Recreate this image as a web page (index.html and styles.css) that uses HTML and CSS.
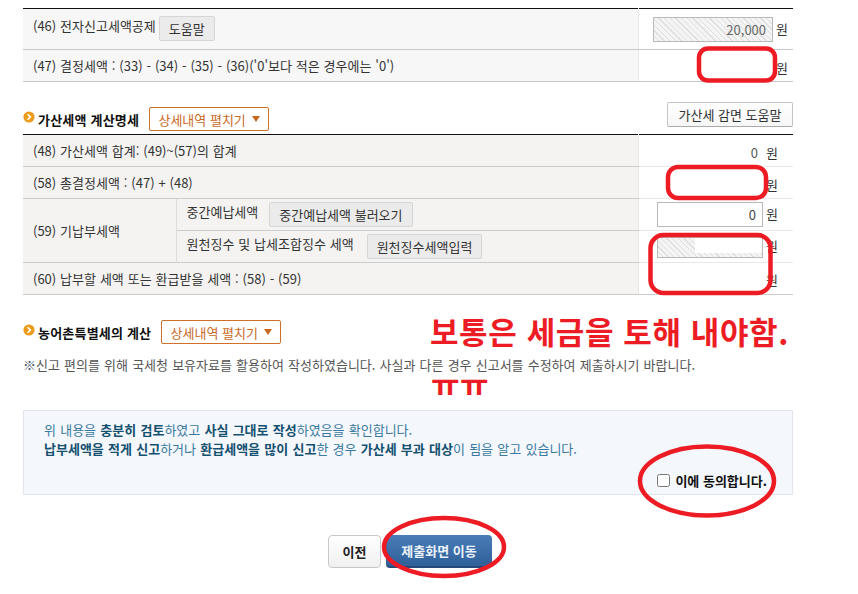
FILE: index.html
```html
<!DOCTYPE html>
<html lang="ko">
<head>
<meta charset="utf-8">
<title>세액 계산</title>
<link rel="stylesheet" href="styles.css">
</head>
<body>
<main class="page">
  <table class="tax warm-none">
    <colgroup><col class="c1"><col class="c2"><col class="c3"></colgroup>
    <tr class="tall">
      <th colspan="2"><span class="nudge">(46) 전자신고세액공제</span><button class="btn-grey">도움말</button></th>
      <td><span class="field hatch">20,000</span><span class="won">원</span></td>
    </tr>
    <tr>
      <th colspan="2">(47) 결정세액 : (33) - (34) - (35) - (36)('0'보다 적은 경우에는 '0')</th>
      <td><span class="won low">원</span></td>
    </tr>
  </table>

  <div class="head first">
    <div class="head-left">
      <svg class="bullet" viewBox="0 0 12 12"><circle cx="6" cy="6" r="5.6" fill="#eb9c1c"/><path d="M4.6 3.2 7.4 6 4.6 8.8" fill="none" stroke="#fff" stroke-width="1.6"/></svg>
      <h2>가산세액 계산명세</h2>
      <button class="btn-orange">상세내역 펼치기<i class="tri"></i></button>
    </div>
    <button class="btn-white">가산세 감면 도움말</button>
  </div>

  <table class="tax warm">
    <colgroup><col class="c1"><col class="c2"><col class="c3"></colgroup>
    <tr>
      <th colspan="2">(48) 가산세액 합계: (49)~(57)의 합계</th>
      <td><span class="plain low">0</span><span class="won low">원</span></td>
    </tr>
    <tr>
      <th colspan="2">(58) 총결정세액 : (47) + (48)</th>
      <td><span class="won low">원</span></td>
    </tr>
    <tr>
      <th rowspan="2">(59) 기납부세액</th>
      <th class="sub"><span class="nudge">중간예납세액</span><button class="btn-grey gap-l">중간예납세액 불러오기</button></th>
      <td><span class="field">0</span><span class="won">원</span></td>
    </tr>
    <tr>
      <th class="sub"><span class="nudge">원천징수 및 납세조합징수 세액</span><button class="btn-grey gap-m">원천징수세액입력</button></th>
      <td><span class="field hatch short"><b class="patch"></b></span><span class="won">원</span></td>
    </tr>
    <tr>
      <th colspan="2">(60) 납부할 세액 또는 환급받을 세액 : (58) - (59)</th>
      <td><span class="won">원</span></td>
    </tr>
  </table>

  <div class="head second">
    <div class="head-left">
      <svg class="bullet" viewBox="0 0 12 12"><circle cx="6" cy="6" r="5.6" fill="#eb9c1c"/><path d="M4.6 3.2 7.4 6 4.6 8.8" fill="none" stroke="#fff" stroke-width="1.6"/></svg>
      <h2>농어촌특별세의 계산</h2>
      <button class="btn-orange">상세내역 펼치기<i class="tri"></i></button>
    </div>
  </div>

  <p class="note"><span class="mark">※</span>신고 편의를 위해 국세청 보유자료를 활용하여 작성하였습니다. 사실과 다른 경우 신고서를 수정하여 제출하시기 바랍니다.</p>

  <section class="confirm">
    <p>위 내용을 <b>충분히 검토</b>하였고 <b>사실 그대로 작성</b>하였음을 확인합니다.<br>
    <b>납부세액을 적게 신고</b>하거나 <b>환급세액을 많이 신고</b>한 경우 <b>가산세 부과 대상</b>이 됨을 알고 있습니다.</p>
    <label class="agree"><input type="checkbox"><span>이에 동의합니다.</span></label>
  </section>

  <div class="actions">
    <button class="btn-prev">이전</button>
    <button class="btn-next">제출화면 이동</button>
  </div>
</main>

<div class="memo memo-a">보통은 세금을 토해 내야함.</div>
<div class="memo memo-b">ㅠㅠ</div>
<svg class="ink" viewBox="0 0 858 594" width="858" height="594" fill="none" stroke="#ed1c24" stroke-width="4.5">
  <rect x="699" y="48.5" width="76" height="32" rx="9"/>
  <rect x="668" y="167" width="98" height="31" rx="10"/>
  <rect x="650.5" y="235" width="120" height="58" rx="13"/>
  <ellipse cx="707" cy="481" rx="67" ry="34.5"/>
  <ellipse cx="444" cy="547" rx="60" ry="29"/>
</svg>
</body>
</html>
```

FILE: styles.css
```css
* { box-sizing: border-box; }
html, body { margin: 0; padding: 0; background: #fff; }
body {
  position: relative;
  width: 858px;
  height: 594px;
  overflow: hidden;
  font-family: "Noto Sans CJK KR", "Noto Sans", sans-serif;
  font-size: 13px;
  color: #333;
}
.page { width: 793px; padding: 8px 0 0 23px; }

button { font-family: inherit; font-size: 13px; cursor: pointer; padding: 0; }

.tax {
  width: 770px;
  table-layout: fixed;
  border-collapse: collapse;
  border-top: 1px solid #111;
}
.c1 { width: 153px; }
.c2 { width: 462px; }
.c3 { width: 155px; }
.tax tr { height: 32px; }
.tax tr.tall { height: 41px; }
.tax th {
  padding: 0 0 0 10px;
  font-weight: 400;
  text-align: left;
  line-height: 18px;
  word-spacing: 0.25px;
  background: #f7f7f7;
  border-bottom: 1px solid #c8c8c8;
  border-left: 0;
  white-space: nowrap;
}
.tax .tall th { padding-bottom: 2px; }
.tax td {
  padding: 0 5px 0 0;
  text-align: right;
  line-height: 18px;
  white-space: nowrap;
  background: #fff;
  border-left: 1px solid #e8e8e8;
  border-bottom: 1px solid #c8c8c8;
}
.warm th { background: #f4f3f2; border-bottom-color: #ccc; }
.warm th[rowspan] { border-right: 1px solid #ddd; }
.warm td { border-bottom-color: #e8e8e8; padding-right: 15px; }
.warm tr:last-child td { border-bottom-color: #ccc; }

.nudge { position: relative; top: -3px; }

.btn-grey {
  height: 25px;
  padding: 0 9px;
  margin-left: 3px;
  color: #333;
  background: #ebebeb;
  border: 1px solid #d6d6d6;
  border-radius: 2px;
}
.gap-l { margin-left: 11px; }
.gap-m { margin-left: 13px; }

.field {
  display: inline-block;
  width: 120px;
  height: 25px;
  line-height: 23px;
  padding-right: 6px;
  text-align: right;
  color: #666;
  background: #fff;
  border: 1px solid #b9b9b9;
  vertical-align: middle;
}
.warm .field { width: 106px; color: #444; }
.hatch {
  background: repeating-linear-gradient(45deg, #f4f4f4 0 3px, #dedede 3px 4px);
}
.short { position: relative; top: 1px; height: 21px; }
.patch {
  position: absolute;
  left: 37px;
  top: 0;
  width: 67px;
  height: 15px;
  background: #fff;
}
.plain { margin-right: 5px; color: #555; }
.won { position: relative; top: 1px; margin-left: 3px; color: #333; }
.low { position: relative; top: 2px; }

.head { display: flex; justify-content: space-between; width: 770px; }
.first { margin-top: 20px; margin-bottom: 3px; }
.second { margin-top: 20px; }
.head-left { display: flex; align-items: center; margin-top: 5px; height: 24px; }
.bullet { width: 12px; height: 12px; margin-right: 3px; position: relative; top: -2px; }
h2 { margin: 0 10px 0 0; font-size: 13px; font-weight: 700; letter-spacing: 0.2px; color: #111; }
.btn-orange {
  display: flex;
  align-items: center;
  justify-content: center;
  width: 120px;
  height: 24px;
  color: #c8681f;
  background: #fff;
  border: 1px solid #d0702a;
  border-radius: 2px;
}
.tri {
  width: 0;
  height: 0;
  margin-left: 6px;
  border-left: 4px solid transparent;
  border-right: 4px solid transparent;
  border-top: 6px solid #c8681f;
}
.btn-white {
  width: 126px;
  height: 25px;
  color: #333;
  background: linear-gradient(#fff, #f6f6f6);
  border: 1px solid #c4c4c4;
  border-bottom-color: #aaa;
  border-radius: 2px;
  align-self: flex-start;
}

.note { margin: 12px 0 0; height: 18px; line-height: 18px; color: #555; word-spacing: 0.5px; white-space: nowrap; }
.mark { display: inline-block; width: 13px; color: #456; font-size: 13px; font-weight: 300; }

.confirm {
  width: 770px;
  height: 85px;
  margin-top: 36px;
  padding: 9px 20px 0;
  position: relative;
  background: #f4f7fc;
  border: 1px solid #e1e6ee;
}
.confirm p { margin: 0; line-height: 19px; color: #3b7aa0; word-spacing: 0.6px; }
.confirm b { color: #14506f; }
.agree { position: absolute; right: 25px; bottom: 4px; display: flex; align-items: center; font-weight: 700; color: #111; }
.agree input { width: 13px; height: 13px; margin: 0 5px 0 0; }

.actions { display: flex; justify-content: center; gap: 5px; width: 770px; padding-left: 4px; margin-top: 40px; }
.btn-prev {
  width: 53px;
  height: 33px;
  font-weight: 700;
  color: #222;
  background: linear-gradient(#fff, #f0f0f0);
  border: 1px solid #c8c8c8;
  border-radius: 4px;
}
.btn-next {
  width: 106px;
  height: 33px;
  font-weight: 700;
  color: #eaf2fa;
  background: linear-gradient(#4a7cb8, #2f6098);
  border: 0;
  border-bottom: 2px solid #234a78;
  border-radius: 4px;
}

.memo {
  position: absolute;
  color: #ed1c24;
  font-weight: 700;
  font-size: 31px;
  letter-spacing: 0.6px;
  line-height: 36px;
  white-space: nowrap;
}
.memo-a { left: 430px; top: 313px; }
.memo-b { left: 431px; top: 375px; height: 22px; line-height: 16px; }
.ink { position: absolute; left: 0; top: 0; pointer-events: none; }
```
